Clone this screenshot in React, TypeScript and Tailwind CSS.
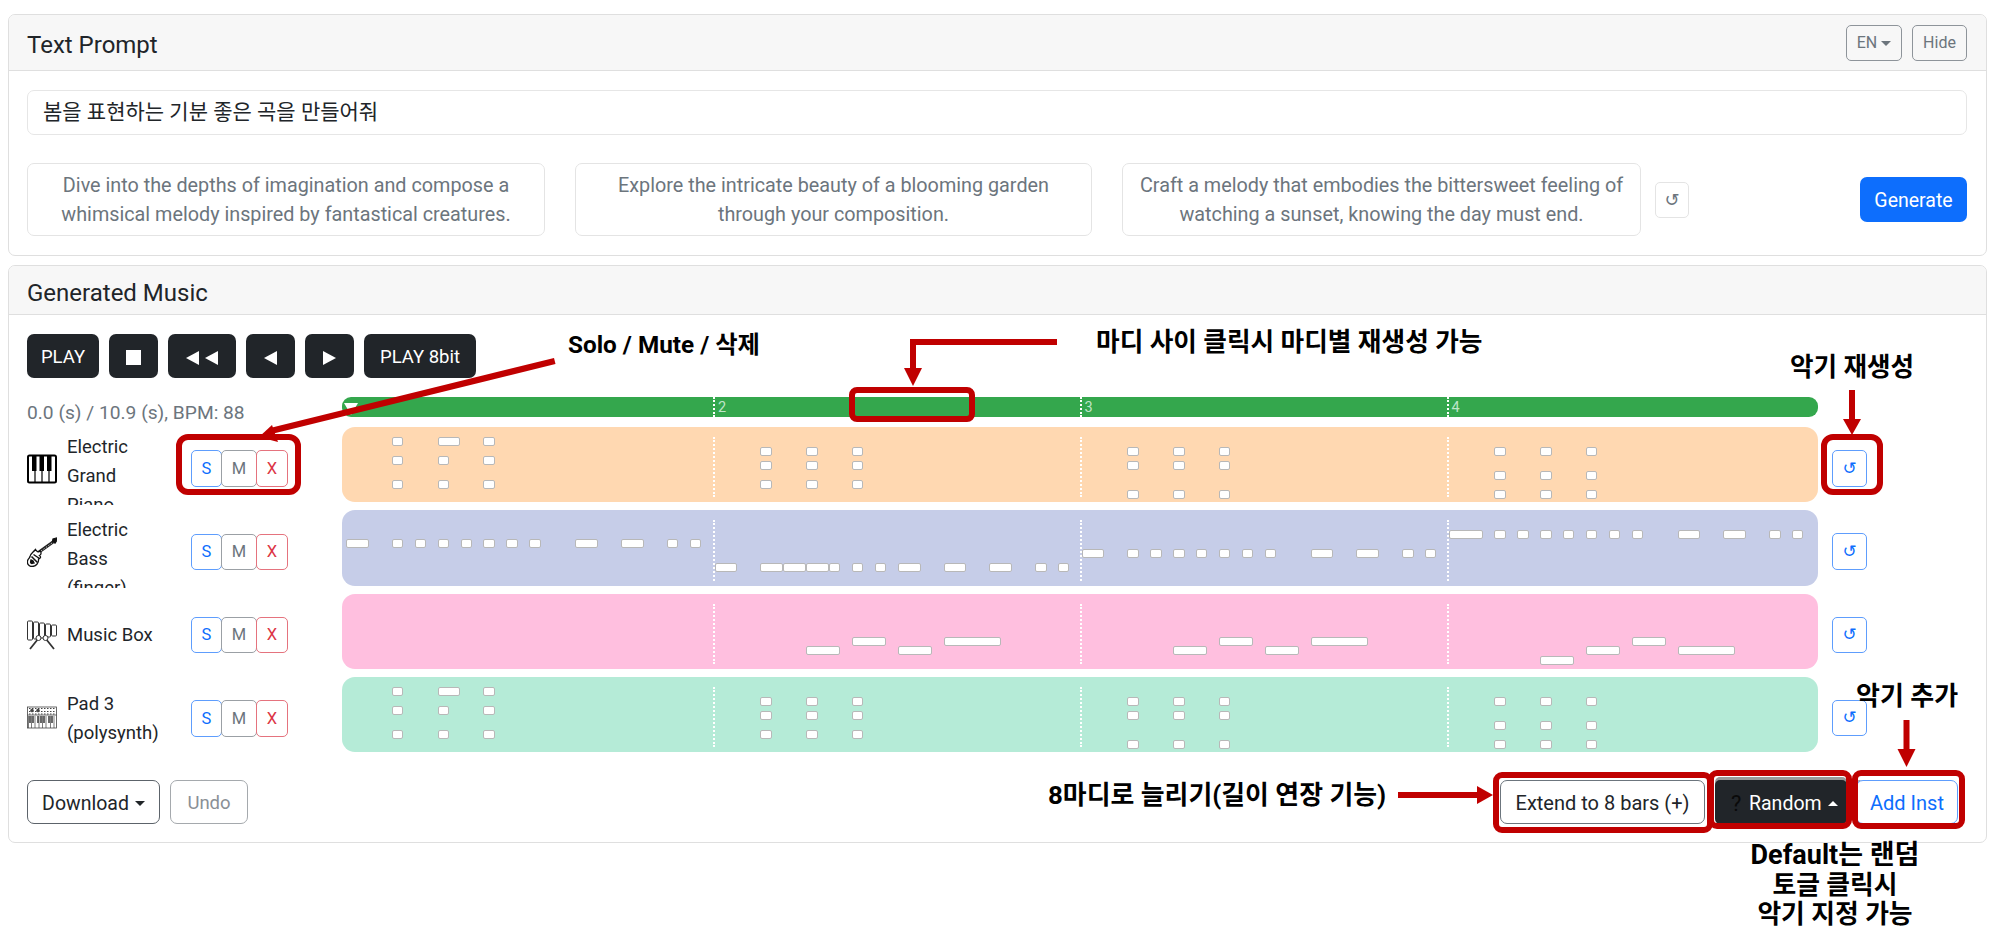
import React from 'react';

const FONT = '[font-family:Roboto,"Noto_Sans_CJK_KR",sans-serif]';

type Note = { bar: number; u: number; w: number; y: number };

const BAR_X = [4.5, 373, 740, 1107];
const LINE_X = [371.5, 738, 1105];
const UNIT = 11.45;

function chordNotes(rows: number[][]) {
  const out: Note[] = [];
  rows.forEach((ys, bar) => {
    ys.forEach((y, i) => {
      [4, 8, 12].forEach((u) => {
        out.push({ bar, u, w: bar === 0 && i === 0 && u === 8 ? 2 : 1, y });
      });
    });
  });
  return out;
}

const bassBar1: number[][] = [[0, 2], [4, 1], [6, 1], [8, 1], [10, 1], [12, 1], [14, 1], [16, 1], [20, 2], [24, 2], [28, 1], [30, 1]];
const bassBar2: number[][] = [[0, 2], [4, 2], [6, 2], [8, 2], [10, 1], [12, 1], [14, 1], [16, 2], [20, 2], [24, 2], [28, 1], [30, 1]];
const bassBar4: number[][] = [[0, 3], [4, 1], [6, 1], [8, 1], [10, 1], [12, 1], [14, 1], [16, 1], [20, 2], [24, 2], [28, 1], [30, 1]];

const bassNotes: Note[] = [
  ...bassBar1.map(([u, w]) => ({ bar: 0, u, w, y: 29 })),
  ...bassBar2.map(([u, w]) => ({ bar: 1, u, w, y: 53 })),
  ...bassBar1.map(([u, w]) => ({ bar: 2, u, w, y: 39 })),
  ...bassBar4.map(([u, w]) => ({ bar: 3, u, w, y: 20 })),
];

const boxNotes: Note[] = [
  { bar: 1, u: 8, w: 3, y: 52 },
  { bar: 1, u: 12, w: 3, y: 43 },
  { bar: 1, u: 16, w: 3, y: 52 },
  { bar: 1, u: 20, w: 5, y: 43 },
  { bar: 2, u: 8, w: 3, y: 52 },
  { bar: 2, u: 12, w: 3, y: 43 },
  { bar: 2, u: 16, w: 3, y: 52 },
  { bar: 2, u: 20, w: 5, y: 43 },
  { bar: 3, u: 8, w: 3, y: 62 },
  { bar: 3, u: 12, w: 3, y: 52 },
  { bar: 3, u: 16, w: 3, y: 43 },
  { bar: 3, u: 20, w: 5, y: 52 },
];

const chordRows = [[10, 29, 53], [20, 34, 53], [20, 34, 63], [20, 44, 63]];

function PianoIcon() {
  return (
    <svg viewBox="0 0 30 30" className="w-[30px] h-[30px]">
      <rect x="1" y="1.5" width="28" height="27" rx="1.5" fill="#fff" stroke="#000" strokeWidth="2" />
      <path d="M8 2v26M15 2v26M22 2v26" stroke="#000" strokeWidth="1.2" />
      <path d="M5 2h4.500v15H5zM12.500 2h4.500v15h-4.500zM20 2h4.500v15H20z" fill="#000" />
    </svg>
  );
}

function BassIcon() {
  return (
    <svg viewBox="0 0 30 30" className="w-[30px] h-[30px]" fill="none" stroke="#111" strokeWidth="1.300">
      <path d="M12 15L26 5" strokeWidth="3" stroke="#222" />
      <path d="M14 14l11-8" strokeWidth="0.700" stroke="#fff" strokeDasharray="1.500 1.500" />
      <path d="M25.500 4.500l.5-2.500 3.500-1 .5 2-2 3z" fill="#111" />
      <path d="M8.500 12.500c1 2 3 3 4.500 1.500 1.500 1 1.500 3.500-.5 4.500 1.500 1 1.500 3-1 3.500 .5 4-2.500 7.500-6.500 7.500-3.500 0-5-3-4.500-5.500.4-2 2-2.500 2.500-4.500.5-2.800 3-4 5.500-7z" fill="#fff" />
      <path d="M4.500 19.500l6 6M6.500 17.500l6 4M3.500 22.500l4 4" strokeWidth="1.500" />
      <circle cx="5" cy="25" r="1.500" fill="#111" />
    </svg>
  );
}

function BoxIcon() {
  return (
    <svg viewBox="0 0 30 30" className="w-[30px] h-[30px]" fill="#fff" stroke="#333" strokeWidth="1">
      <rect x="0.500" y="1" width="5" height="19" rx="1" />
      <rect x="6.500" y="2" width="5" height="17" rx="1" />
      <rect x="12.500" y="3" width="5" height="15" rx="1" />
      <rect x="18.500" y="4" width="5" height="13" rx="1" />
      <rect x="24.500" y="5" width="5" height="11" rx="1" />
      <path d="M3 29l8-10M27 29l-8-10" strokeWidth="1.800" />
      <circle cx="11.500" cy="18" r="2.500" />
      <circle cx="18.500" cy="18" r="2.500" />
    </svg>
  );
}

function SynthIcon() {
  return (
    <svg viewBox="0 0 30 30" className="w-[30px] h-[30px]" fill="none" stroke="#444" strokeWidth="0.800">
      <rect x="0.500" y="4" width="29" height="21" fill="#fff" />
      <path d="M0.500 12h29" />
      <path d="M2 5.500h26M2 8.500h26M2 11h26" strokeDasharray="1.500 1.500" strokeWidth="1" />
      <circle cx="5" cy="7.500" r="1.400" fill="#444" />
      <circle cx="11" cy="7.500" r="1.400" fill="#444" />
      <path d="M3 13v7M6 13v7M11 13v7M14 13v7M17 13v7M22 13v7M25 13v7" strokeWidth="1.600" />
      <path d="M1.500 13v12M4.500 13v12M8 13v12M12 13v12M15.500 13v12M19 13v12M23.500 13v12M27 13v12" strokeWidth="0.700" />
    </svg>
  );
}

function PromptCard({ lines, width }: { lines: string[]; width: string }) {
  return (
    <div className={`h-[73px] ${width} shrink-0 pt-[3px] rounded-[7px] border border-[#e4e4e4] flex flex-col justify-center text-center text-[#6c757d] leading-[28.8px] text-[19.800px]`}>
      {lines.map((l) => (
        <div key={l} className="whitespace-nowrap">{l}</div>
      ))}
    </div>
  );
}

function TransportButton({ children, width }: { children: React.ReactNode; width: string }) {
  return (
    <div className={`h-[44px] ${width} pt-[3px] rounded-[7px] bg-[#212529] text-white text-[18.500px] flex items-center justify-center`}>
      {children}
    </div>
  );
}

function Triangle({ dir }: { dir: 'left' | 'right' }) {
  return dir === 'left' ? (
    <span className="w-0 h-0 border-y-[7.500px] border-y-transparent border-r-[13px] border-r-white" />
  ) : (
    <span className="w-0 h-0 border-y-[7.500px] border-y-transparent border-l-[13px] border-l-white" />
  );
}

function Caret({ up, color }: { up?: boolean; color: string }) {
  return up ? (
    <span className={`inline-block w-0 h-0 border-x-[5.500px] border-x-transparent border-b-[5.500px] ${color}`} />
  ) : (
    <span className={`inline-block w-0 h-0 border-x-[5.500px] border-x-transparent border-t-[5.500px] ${color}`} />
  );
}

function Roll({ bg, notes, h }: { bg: string; notes: Note[]; h: string }) {
  return (
    <div className={`relative w-[1476px] ${h} rounded-[13px] ${bg}`}>
      {LINE_X.map((x) => (
        <div
          key={x}
          className="absolute top-[10px] bottom-[5px] border-l-2 border-dotted border-white"
          style={{ left: x }}
        />
      ))}
      {notes.map((n, i) => (
        <div
          key={i}
          className="absolute h-[9px] rounded-[2px] bg-white border border-[#b8b8b8]"
          style={{ left: BAR_X[n.bar] + n.u * UNIT, top: n.y, width: n.w * UNIT }}
        />
      ))}
    </div>
  );
}

function TrackRow({
  icon,
  lines,
  bg,
  notes,
}: {
  icon: React.ReactNode;
  lines: string[];
  bg: string;
  notes: Note[];
}) {
  return (
    <div className="flex h-[75.300px]">
      <div className="w-[314.500px] shrink-0 flex pt-[5px] h-[78px]">
        <div className="w-[40px] shrink-0 h-[73px] flex items-center">{icon}</div>
        <div className="w-[124px] shrink-0 h-[73px] pt-px flex items-center">
          <div className="max-h-[72px] overflow-hidden leading-[28.800px] text-[18.500px] text-[#212529] w-[100px]">
            {lines.map((l) => (
              <div key={l} className="whitespace-nowrap">{l}</div>
            ))}
          </div>
        </div>
        <div className="h-[73px] flex items-center text-[16.500px]">
          <div className="w-[31px] h-[36.500px] pt-px flex items-center justify-center rounded-[5px] border border-[#5e9dfd] text-[#0d6efd]">S</div>
          <div className="w-[36px] h-[36.500px] pt-px -ml-px flex items-center justify-center rounded-[5px] border border-[#9ba0a5] text-[#6c757d]">M</div>
          <div className="w-[32px] h-[36.500px] pt-px -ml-px flex items-center justify-center rounded-[5px] border border-[#e5737e] text-[#dc3545]">X</div>
        </div>
      </div>
      <Roll bg={bg} notes={notes} h="h-[75.300px]" />
      <div className="ml-[14.500px] mt-[23px] w-[35px] h-[36.500px] flex items-center justify-center rounded-[5px] border border-[#5e9dfd] text-[#0d6efd] text-[17px] [font-family:'DejaVu_Sans',sans-serif]">
        ↺
      </div>
    </div>
  );
}

export default function App() {
  return (
    <div className={`relative min-h-[945px] bg-white pt-[14px] pl-2 ${FONT}`}>
      {/* Text prompt card */}
      <div className="w-[1979px] h-[242px] rounded-[7px] border border-[#dfdfdf] overflow-hidden">
        <div className="h-[56px] bg-[#f7f7f7] border-b border-[#dfdfdf] flex items-center pl-[18px] pr-[19px]">
          <div className="text-[24px] pt-[5px] text-[#212529] flex-1">Text Prompt</div>
          <div className="flex gap-[10px] text-[16px] text-[#6c757d]">
            <div className="w-[56px] h-[36px] pt-px rounded-[5px] border border-[#8e949a] flex items-center justify-center gap-[4px]">
              EN <Caret color="border-t-[#6c757d]" />
            </div>
            <div className="w-[55px] h-[36px] pt-px rounded-[5px] border border-[#8e949a] flex items-center justify-center">Hide</div>
          </div>
        </div>
        <div className="pt-[19px] pl-[18px] pr-[19px]">
          <div className="h-[45px] rounded-[7px] border border-[#e6e6e6] flex items-center pl-[15px] text-[21px] text-[#212529]">
            봄을 표현하는 기분 좋은 곡을 만들어줘
          </div>
          <div className="flex items-center mt-[28px]">
            <PromptCard width="w-[518px]" lines={['Dive into the depths of imagination and compose a', 'whimsical melody inspired by fantastical creatures.']} />
            <div className="w-[30px] shrink-0" />
            <PromptCard width="w-[517px]" lines={['Explore the intricate beauty of a blooming garden', 'through your composition.']} />
            <div className="w-[30px] shrink-0" />
            <PromptCard width="w-[519px]" lines={['Craft a melody that embodies the bittersweet feeling of', 'watching a sunset, knowing the day must end.']} />
            <div className="ml-[14px] w-[34px] h-[36px] rounded-[5px] border border-[#e4e4e4] flex items-center justify-center text-[#6c757d] text-[18px] [font-family:'DejaVu_Sans',sans-serif]">
              ↺
            </div>
            <div className="ml-auto w-[107px] h-[45px] pt-[3px] rounded-[7px] bg-[#0d6efd] text-white text-[19.500px] flex items-center justify-center">
              Generate
            </div>
          </div>
        </div>
      </div>

      {/* Generated music card */}
      <div className="w-[1979px] mt-[9px] h-[578px] rounded-[7px] border border-[#dfdfdf] overflow-hidden">
        <div className="h-[49px] pt-[5px] bg-[#f7f7f7] border-b border-[#dfdfdf] flex items-center pl-[18px] text-[24px] text-[#212529]">
          Generated Music
        </div>
        <div className="pt-[19px] pl-[18px]">
          <div className="flex gap-[10px]">
            <TransportButton width="w-[72px]">PLAY</TransportButton>
            <TransportButton width="w-[49px]">
              <span className="w-[15px] h-[15px] bg-white" />
            </TransportButton>
            <TransportButton width="w-[68px]">
              <span className="flex gap-[6px]">
                <Triangle dir="left" />
                <Triangle dir="left" />
              </span>
            </TransportButton>
            <TransportButton width="w-[49px]">
              <Triangle dir="left" />
            </TransportButton>
            <TransportButton width="w-[49px]">
              <Triangle dir="right" />
            </TransportButton>
            <TransportButton width="w-[112px]">PLAY 8bit</TransportButton>
          </div>

          <div className="flex mt-[19px] mb-[10px] h-[20px]">
            <div className="w-[314.500px] shrink-0 text-[19.200px] leading-[32px] text-[#6c757d] whitespace-nowrap">
              0.0 (s) / 10.9 (s), BPM: 88
            </div>
            <div className="relative w-[1476px] h-[20px] rounded-[9px] bg-[#34a74d] overflow-hidden">
              <span className="absolute left-[2px] top-[6px] w-0 h-0 border-x-[7px] border-x-transparent border-t-[12px] border-t-white" />
              {[['2', 371.5], ['3', 738], ['4', 1105]].map(([n, x]) => (
                <React.Fragment key={n}>
                  <div className="absolute top-0 bottom-0 border-l-2 border-dotted border-white" style={{ left: x as number }} />
                  <span className="absolute top-0 text-[14.500px] leading-[22px] text-[#bfe5c8]" style={{ left: (x as number) + 5 }}>
                    {n}
                  </span>
                </React.Fragment>
              ))}
            </div>
          </div>

          <div className="flex flex-col gap-2">
            <TrackRow icon={<PianoIcon />} lines={['Electric', 'Grand', 'Piano']} bg="bg-[#ffd8b1]" notes={chordNotes(chordRows)} />
            <TrackRow icon={<BassIcon />} lines={['Electric', 'Bass', '(finger)']} bg="bg-[#c6cde8]" notes={bassNotes} />
            <TrackRow icon={<BoxIcon />} lines={['Music Box']} bg="bg-[#ffbfdf]" notes={boxNotes} />
            <TrackRow icon={<SynthIcon />} lines={['Pad 3', '(polysynth)']} bg="bg-[#b5ebd7]" notes={chordNotes(chordRows)} />
          </div>

          <div className="flex items-center mt-[28px] text-[20px]">
            <div className="w-[133px] h-[44px] pt-[2px] rounded-[7px] border border-[#5c636a] text-[#212529] text-[19.500px] flex items-center justify-center gap-[6px]">
              Download <Caret color="border-t-[#212529]" />
            </div>
            <div className="ml-[10px] w-[78px] h-[44px] pt-[3px] rounded-[7px] border border-[#a5a9ad] text-[#8a9096] text-[18.500px] flex items-center justify-center">
              Undo
            </div>
            <div className="ml-[1252px] w-[205px] h-[44px] pt-[2px] rounded-[7px] border border-[#6c757d] text-[#212529] flex items-center justify-center">
              Extend to 8 bars (+)
            </div>
            <div className="ml-[10px] w-[132px] h-[44px] pt-[2px] pl-[16px] rounded-[5px] bg-[#212529] shadow-[0_-3px_0_#999] text-white text-[19.500px] flex items-center gap-[6px]">
              <span className="text-[#0a0a0a] text-[22px] w-[12px]">?</span> Random <Caret up color="border-b-white" />
            </div>
            <div className="ml-[9px] w-[102px] h-[44px] pt-[2px] rounded-[7px] border border-[#5e9dfd] shadow-[-3px_0_0_#999] text-[#0d6efd] flex items-center justify-center">
              Add Inst
            </div>
          </div>
        </div>
      </div>

      {/* Annotations drawn over the screenshot */}
      <div className="absolute left-[849px] top-[387px] w-[126px] h-[35px] rounded-[8px] border-[6px] border-[#c00000]" />
      <div className="absolute left-[176px] top-[434px] w-[125px] h-[61px] rounded-[12px] border-[6px] border-[#c00000]" />
      <div className="absolute left-[1821px] top-[434px] w-[62px] h-[61px] rounded-[12px] border-[6px] border-[#c00000]" />
      <div className="absolute left-[1493px] top-[772px] w-[220px] h-[61px] rounded-[9px] border-[6px] border-[#c00000]" />
      <div className="absolute left-[1708px] top-[770px] w-[144px] h-[59px] rounded-[9px] border-[6px] border-[#c00000]" />
      <div className="absolute left-[1852px] top-[770px] w-[113px] h-[59px] rounded-[9px] border-[6px] border-[#c00000]" />

      <svg className="absolute left-0 top-0 pointer-events-none" width="2003" height="945" fill="#c00000">
        <path d="M1057 339H910v29h6v-23h141z" />
        <path d="M904 368h18l-9 18z" />
        <path d="M554 358L270 428l1.500 6L555.500 364z" />
        <path d="M259 437l13-12 6 17z" />
        <path d="M1849 390h6v29h-6z" />
        <path d="M1843 419h18l-9 16z" />
        <path d="M1903.500 720h6v30h-6z" />
        <path d="M1897.500 749h18l-9 18z" />
        <path d="M1398 792h80v6h-80z" />
        <path d="M1477 786l16 9-16 9z" />
      </svg>

      <div className="absolute left-[568px] top-[328px] text-[24.300px] leading-[34px] font-bold text-black whitespace-nowrap">Solo / Mute / 삭제</div>
      <div className="absolute left-[1096px] top-[325px] text-[25.700px] leading-[34px] font-bold text-black whitespace-nowrap">마디 사이 클릭시 마디별 재생성 가능</div>
      <div className="absolute left-[1790px] top-[350px] text-[25.600px] leading-[34px] font-bold text-black whitespace-nowrap">악기 재생성</div>
      <div className="absolute left-[1856px] top-[679px] text-[26px] leading-[34px] font-bold text-black whitespace-nowrap">악기 추가</div>
      <div className="absolute left-[1048px] top-[778px] text-[25.900px] leading-[34px] font-bold text-black whitespace-nowrap">8마디로 늘리기(길이 연장 기능)</div>
      <div className="absolute left-[1735px] top-[841px] w-[200px] text-center text-[25.800px] leading-[29.500px] font-bold text-black">
        <div className="text-[27px]">Default는 랜덤</div>
        <div>토글 클릭시</div>
        <div>악기 지정 가능</div>
      </div>
    </div>
  );
}
